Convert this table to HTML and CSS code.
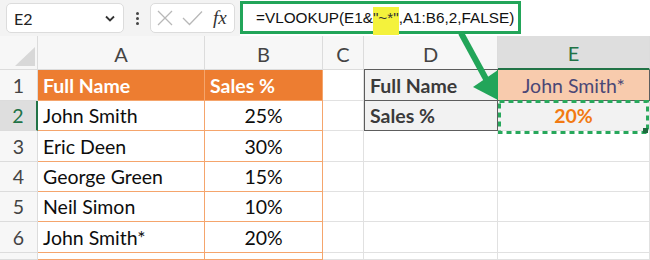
FILE: index.html
```html
<!DOCTYPE html>
<html lang="en">
<head>
    <meta charset="UTF-8">
    <title>VLOOKUP wildcard</title>
    <link rel="stylesheet" href="styles.css">
</head>
<body>
    <div class="toolbar">
        <div class="namebox">
            <span>E2</span>
            <svg class="chevron" width="10" height="7" viewBox="0 0 10 7"><path d="M1 1.5 L5 5.5 L9 1.5" fill="none" stroke="#333" stroke-width="1.8"/></svg>
        </div>
        <div class="grip"><i></i><i></i><i></i></div>
        <div class="fxbox">
            <svg width="16" height="16" viewBox="0 0 16 16"><path d="M1 1 L15 15 M15 1 L1 15" stroke="#b8b8b8" stroke-width="1.3"/></svg>
            <svg width="21" height="16" viewBox="0 0 21 16"><path d="M1 8 L7.5 14.5 L20 1.5" fill="none" stroke="#b8b8b8" stroke-width="1.3"/></svg>
            <span class="fx">fx</span>
        </div>
        <div class="formulabar">
            <div class="formula">=VLOOKUP(E1&amp;<mark>"~*"</mark>,A1:B6,2,FALSE)</div>
        </div>
    </div>

    <div class="sheet">
        <!-- column headers -->
        <div class="corner"><span class="tri"></span></div>
        <div class="colhead">A</div>
        <div class="colhead">B</div>
        <div class="colhead">C</div>
        <div class="colhead">D</div>
        <div class="colhead active">E</div>

        <!-- row 1 -->
        <div class="rowhead">1</div>
        <div class="cell th">Full Name</div>
        <div class="cell th">Sales %</div>
        <div class="cell"></div>
        <div class="cell lookup top">Full Name</div>
        <div class="cell result">John Smith*</div>

        <!-- row 2 -->
        <div class="rowhead active">2</div>
        <div class="cell td">John Smith</div>
        <div class="cell td num">25%</div>
        <div class="cell"></div>
        <div class="cell lookup">Sales %</div>
        <div class="cell picked">
            20%
            <svg class="marquee" width="152" height="35" viewBox="0 0 152 35">
                <rect x="1.5" y="1.5" width="148" height="31" fill="none" stroke="#28a85c" stroke-width="3" stroke-dasharray="5 4"/>
                <rect x="145" y="28" width="5" height="5" fill="#1e6b3f"/>
            </svg>
        </div>

        <!-- row 3 -->
        <div class="rowhead">3</div>
        <div class="cell td">Eric Deen</div>
        <div class="cell td num">30%</div>
        <div class="cell"></div>
        <div class="cell"></div>
        <div class="cell"></div>

        <!-- row 4 -->
        <div class="rowhead">4</div>
        <div class="cell td">George Green</div>
        <div class="cell td num">15%</div>
        <div class="cell"></div>
        <div class="cell"></div>
        <div class="cell"></div>

        <!-- row 5 -->
        <div class="rowhead">5</div>
        <div class="cell td">Neil Simon</div>
        <div class="cell td num">10%</div>
        <div class="cell"></div>
        <div class="cell"></div>
        <div class="cell"></div>

        <!-- row 6 -->
        <div class="rowhead">6</div>
        <div class="cell td">John Smith*</div>
        <div class="cell td num">20%</div>
        <div class="cell"></div>
        <div class="cell"></div>
        <div class="cell"></div>

        <!-- row 7 (cut off) -->
        <div class="rowhead"></div>
        <div class="cell td"></div>
        <div class="cell td"></div>
        <div class="cell"></div>
        <div class="cell"></div>
        <div class="cell"></div>
    </div>

    <!-- callout arrow from the formula to the result cell -->
    <svg class="arrow" width="650" height="260" viewBox="0 0 650 260">
        <line x1="461" y1="33" x2="486" y2="79" stroke="#22a559" stroke-width="6"/>
        <polygon points="498,100 498,70 473,87" fill="#22a559"/>
    </svg>
</body>
</html>
```

FILE: styles.css
```css
* {
    margin: 0;
    padding: 0;
    box-sizing: border-box;
}

body {
    width: 650px;
    height: 260px;
    overflow: hidden;
    position: relative;
    background: #fff;
    font-family: 'Lato', 'Liberation Sans', sans-serif;
    color: #111;
}

/* ---------- formula bar ---------- */

.toolbar {
    height: 36px;
    display: flex;
    align-items: center;
    background: #f3f3f3;
    padding-left: 6px;
}

.namebox {
    width: 118px;
    height: 30px;
    background: #fff;
    border: 1px solid #dcdcdc;
    border-radius: 5px;
    display: flex;
    align-items: center;
    justify-content: space-between;
    padding: 0 8px 0 7px;
    font-size: 16px;
    color: #222;
}

.grip {
    width: 26px;
    display: flex;
    flex-direction: column;
    align-items: center;
    gap: 2px;
}

.grip i {
    width: 3px;
    height: 3px;
    background: #444;
    border-radius: 50%;
}

.fxbox {
    width: 85px;
    height: 30px;
    background: #fff;
    border: 1px solid #dcdcdc;
    border-radius: 5px;
    display: flex;
    align-items: center;
    padding-left: 6px;
    gap: 9px;
}

.fx {
    font-family: 'Liberation Serif', serif;
    font-style: italic;
    font-size: 19px;
    color: #333;
    margin-left: 1px;
}

.formulabar {
    flex: 1;
    align-self: stretch;
    background: #fff;
    margin-left: 5px;
    padding: 1px 0 2px;
    display: flex;
}

.formula {
    width: 281px;
    display: flex;
    align-items: center;
    font-family: 'Liberation Sans', sans-serif;
    font-size: 15.3px;
    color: #111;
    padding-left: 13px;
    border: 3px solid #22a559;
}

.formula mark {
    background: #f4f23c;
    color: #333;
    padding: 2px 0 8px;
    margin-top: 6px;
}

/* ---------- grid ---------- */

.sheet {
    display: grid;
    grid-template-columns: 38px 167px 118px 41px 134px 152px;
    grid-template-rows: 34px 31px 30px 31px 30px 30px 31px 7px;
    font-size: 19.5px;
}

.corner,
.colhead,
.rowhead {
    background: #f7f7f7;
    border-right: 1px solid #dcdcdc;
    border-bottom: 1px solid #dcdcdc;
    color: #444;
    display: flex;
    align-items: center;
    justify-content: center;
}

.colhead {
    font-size: 20px;
    padding-top: 2px;
}

.corner {
    position: relative;
}

.tri {
    position: absolute;
    left: 15px;
    top: 11px;
    width: 0;
    height: 0;
    border-left: 20px solid transparent;
    border-bottom: 19px solid #d8d8d8;
}

.colhead.active {
    background: #dedede;
    color: #217346;
    border-bottom: 2px solid #217346;
}

.rowhead.active {
    background: #dedede;
    color: #217346;
    border-right: 2px solid #217346;
}

.cell {
    border-right: 1px solid #e1e1e1;
    border-bottom: 1px solid #e1e1e1;
    display: flex;
    align-items: center;
    padding-left: 5px;
    white-space: nowrap;
    position: relative;
}

/* source table A1:B6 */
.th {
    background: #ed7d31;
    color: #fff;
    font-weight: bold;
    border-color: #f5a56c;
}

.td {
    border-color: #f5a56c;
    color: #0d0d0d;
}

.num {
    justify-content: center;
    padding-left: 0;
}

/* lookup block D1:E2 */
.lookup {
    background: #f2f2f2;
    color: #3a3a3a;
    font-weight: bold;
    border: 1px solid #5d5d5d;
    border-top: none;
}

.lookup.top {
    border-top: 1px solid #5d5d5d;
    margin-top: -1px;
}

.result {
    background: #f8cbad;
    color: #4a4776;
    justify-content: center;
    padding-left: 0;
    border-color: #5d5d5d;
}

.picked {
    background: #f2f2f2;
    color: #f27a12;
    font-weight: bold;
    justify-content: center;
    padding-left: 0;
}

.marquee {
    position: absolute;
    left: 0;
    top: -1px;
}

.arrow {
    position: absolute;
    left: 0;
    top: 0;
    pointer-events: none;
}
```
